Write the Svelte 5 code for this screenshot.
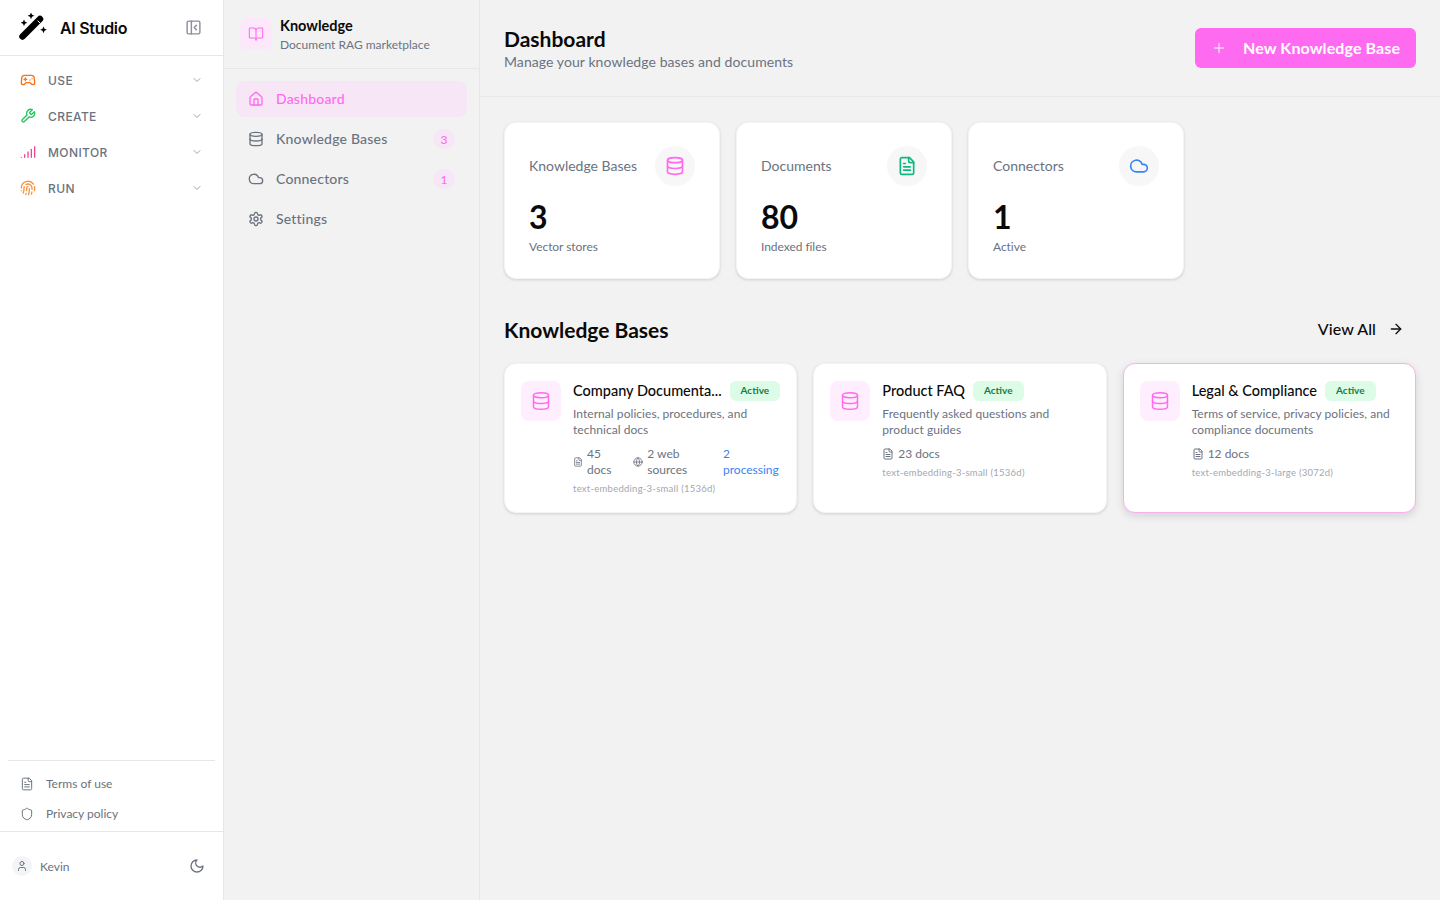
<script>
  const pink = "#ff6bf0";

  const mainNav = [
    { label: "USE", color: "#f97316", icon: "gamepad" },
    { label: "CREATE", color: "#22c55e", icon: "wrench" },
    { label: "MONITOR", color: "#ec4899", icon: "signal" },
    { label: "RUN", color: "#fb923c", icon: "fingerprint" },
  ];

  const subNav = [
    { label: "Dashboard", icon: "house", active: true },
    { label: "Knowledge Bases", icon: "database", badge: 3 },
    { label: "Connectors", icon: "cloud", badge: 1 },
    { label: "Settings", icon: "settings" },
  ];

  const stats = [
    { title: "Knowledge Bases", value: "3", note: "Vector stores", icon: "database", color: pink },
    { title: "Documents", value: "80", note: "Indexed files", icon: "file", color: "#10b981" },
    { title: "Connectors", value: "1", note: "Active", icon: "cloud", color: "#3b82f6" },
  ];

  const bases = [
    {
      name: "Company Documenta...",
      desc: "Internal policies, procedures, and technical docs",
      docs: "45 docs",
      web: "2 web sources",
      processing: "2 processing",
      model: "text-embedding-3-small (1536d)",
    },
    {
      name: "Product FAQ",
      desc: "Frequently asked questions and product guides",
      docs: "23 docs",
      model: "text-embedding-3-small (1536d)",
    },
    {
      name: "Legal & Compliance",
      desc: "Terms of service, privacy policies, and compliance documents",
      docs: "12 docs",
      model: "text-embedding-3-large (3072d)",
      hovered: true,
    },
  ];
</script>

{#snippet icon(name, size, color, sw = 2)}
  <svg class="icon" width={size} height={size} viewBox="0 0 24 24" fill="none" stroke={color} stroke-width={sw} stroke-linecap="round" stroke-linejoin="round">
    {#if name === "database"}
      <ellipse cx="12" cy="5" rx="9" ry="3" /><path d="M3 5V19A9 3 0 0 0 21 19V5" /><path d="M3 12A9 3 0 0 0 21 12" />
    {:else if name === "file"}
      <path d="M15 2H6a2 2 0 0 0-2 2v16a2 2 0 0 0 2 2h12a2 2 0 0 0 2-2V7Z" /><path d="M14 2v4a2 2 0 0 0 2 2h4" /><path d="M10 9H8" /><path d="M16 13H8" /><path d="M16 17H8" />
    {:else if name === "cloud"}
      <path d="M17.5 19H9a7 7 0 1 1 6.71-9h1.79a4.5 4.5 0 1 1 0 9Z" />
    {:else if name === "house"}
      <path d="M15 21v-8a1 1 0 0 0-1-1h-4a1 1 0 0 0-1 1v8" /><path d="M3 10a2 2 0 0 1 .709-1.528l7-5.999a2 2 0 0 1 2.582 0l7 5.999A2 2 0 0 1 21 10v9a2 2 0 0 1-2 2H5a2 2 0 0 1-2-2z" />
    {:else if name === "settings"}
      <path d="M12.22 2h-.44a2 2 0 0 0-2 2v.18a2 2 0 0 1-1 1.73l-.43.25a2 2 0 0 1-2 0l-.15-.08a2 2 0 0 0-2.73.73l-.22.38a2 2 0 0 0 .73 2.73l.15.1a2 2 0 0 1 1 1.72v.51a2 2 0 0 1-1 1.74l-.15.09a2 2 0 0 0-.73 2.73l.22.38a2 2 0 0 0 2.73.73l.15-.08a2 2 0 0 1 2 0l.43.25a2 2 0 0 1 1 1.73V20a2 2 0 0 0 2 2h.44a2 2 0 0 0 2-2v-.18a2 2 0 0 1 1-1.73l.43-.25a2 2 0 0 1 2 0l.15.08a2 2 0 0 0 2.73-.73l.22-.39a2 2 0 0 0-.73-2.73l-.15-.08a2 2 0 0 1-1-1.74v-.5a2 2 0 0 1 1-1.74l.15-.09a2 2 0 0 0 .73-2.73l-.22-.38a2 2 0 0 0-2.73-.73l-.15.08a2 2 0 0 1-2 0l-.43-.25a2 2 0 0 1-1-1.73V4a2 2 0 0 0-2-2z" /><circle cx="12" cy="12" r="3" />
    {:else if name === "book"}
      <path d="M12 7v14" /><path d="M3 18a1 1 0 0 1-1-1V4a1 1 0 0 1 1-1h5a4 4 0 0 1 4 4 4 4 0 0 1 4-4h5a1 1 0 0 1 1 1v13a1 1 0 0 1-1 1h-6a3 3 0 0 0-3 3 3 3 0 0 0-3-3z" />
    {:else if name === "globe"}
      <circle cx="12" cy="12" r="10" /><path d="M12 2a14.5 14.5 0 0 0 0 20 14.5 14.5 0 0 0 0-20" /><path d="M2 12h20" />
    {:else if name === "arrow"}
      <path d="M5 12h14" /><path d="m12 5 7 7-7 7" />
    {:else if name === "plus"}
      <path d="M5 12h14" /><path d="M12 5v14" />
    {:else if name === "chevron"}
      <path d="m6 9 6 6 6-6" />
    {:else if name === "shield"}
      <path d="M20 13c0 5-3.5 7.5-7.66 8.95a1 1 0 0 1-.67-.01C7.5 20.5 4 18 4 13V6a1 1 0 0 1 1-1c2 0 4.5-1.2 6.24-2.72a1.17 1.17 0 0 1 1.52 0C14.51 3.81 17 5 19 5a1 1 0 0 1 1 1z" />
    {:else if name === "user"}
      <path d="M19 21v-2a4 4 0 0 0-4-4H9a4 4 0 0 0-4 4v2" /><circle cx="12" cy="7" r="4" />
    {:else if name === "moon"}
      <path d="M12 3a6 6 0 0 0 9 9 9 9 0 1 1-9-9Z" />
    {:else if name === "gamepad"}
      <line x1="6" x2="10" y1="11" y2="11" /><line x1="8" x2="8" y1="9" y2="13" /><line x1="15" x2="15.01" y1="12" y2="12" /><line x1="18" x2="18.01" y1="10" y2="10" /><path d="M17.32 5H6.68a4 4 0 0 0-3.978 3.59c-.006.052-.01.101-.017.152C2.604 9.416 2 14.456 2 16a3 3 0 0 0 3 3c1 0 1.5-.5 2-1l1.414-1.414A2 2 0 0 1 9.828 16h4.344a2 2 0 0 1 1.414.586L17 18c.5.5 1 1 2 1a3 3 0 0 0 3-3c0-1.545-.604-6.584-.685-7.258-.007-.05-.011-.1-.017-.151A4 4 0 0 0 17.32 5z" />
    {:else if name === "wrench"}
      <path d="M14.7 6.3a1 1 0 0 0 0 1.4l1.6 1.6a1 1 0 0 0 1.4 0l3.77-3.77a6 6 0 0 1-7.94 7.94l-6.91 6.91a2.12 2.12 0 0 1-3-3l6.91-6.91a6 6 0 0 1 7.94-7.94l-3.76 3.76z" />
    {:else if name === "signal"}
      <path d="M2 20h.01" /><path d="M7 20v-4" /><path d="M12 20v-8" /><path d="M17 20V8" /><path d="M22 4v16" />
    {:else if name === "fingerprint"}
      <path d="M12 10a2 2 0 0 0-2 2c0 1.02-.1 2.51-.26 4" /><path d="M14 13.12c0 2.38 0 6.38-1 8.88" /><path d="M17.29 21.02c.12-.6.43-2.3.5-3.02" /><path d="M2 12a10 10 0 0 1 18-6" /><path d="M2 16h.01" /><path d="M21.8 16c.2-2 .131-5.354 0-6" /><path d="M5 19.5C5.5 18 6 15 6 12a6 6 0 0 1 .34-2" /><path d="M8.65 22c.21-.66.45-1.32.57-2" /><path d="M9 6.8a6 6 0 0 1 9 5.2v2" />
    {:else if name === "panel"}
      <rect width="18" height="18" x="3" y="3" rx="2" /><path d="M9 3v18" /><path d="m16 15-3-3 3-3" />
    {/if}
  </svg>
{/snippet}

<div class="page">
  <aside class="rail">
    <div class="brand">
      <svg class="logo" width="30" height="30" viewBox="0 0 30 30">
        <path d="M4.5 23.5 22 6" stroke="#000" stroke-width="6.5" stroke-linecap="round" />
        <path d="M19.6 7.6l2.6 2.6" stroke="#fff" stroke-width="1" />
        <path d="M13 -0.6l1 2.4 2.4 1-2.4 1-1 2.4-1-2.4-2.4-1 2.4-1zM6 6.4l1 2.4 2.4 1-2.4 1-1 2.4-1-2.4-2.4-1 2.4-1zM25.5 13.4l1 2.4 2.4 1-2.4 1-1 2.4-1-2.4-2.4-1 2.4-1z" fill="#000" />
      </svg>
      <span class="brand-name">AI Studio</span>
      <span class="collapse">{@render icon("panel", 17, "#8b8f99")}</span>
    </div>

    <nav class="rail-nav">
      {#each mainNav as item}
        <div class="rail-item">
          {@render icon(item.icon, 16, item.color)}
          <span class="rail-label">{item.label}</span>
          <span class="rail-chev">{@render icon("chevron", 12, "#9ca3af")}</span>
        </div>
      {/each}
    </nav>

    <div class="legal">
      <div class="legal-row">{@render icon("file", 14, "#6b7280", 1.7)}<span>Terms of use</span></div>
      <div class="legal-row">{@render icon("shield", 14, "#6b7280", 1.7)}<span>Privacy policy</span></div>
    </div>

    <div class="account">
      <span class="avatar">{@render icon("user", 12, "#6b7280")}</span>
      <span class="account-name">Kevin</span>
      <span class="theme">{@render icon("moon", 16, "#6b7280")}</span>
    </div>
  </aside>

  <aside class="sub">
    <div class="sub-head">
      <span class="sub-logo">{@render icon("book", 16, pink, 1.6)}</span>
      <div class="sub-text">
        <div class="sub-title">Knowledge</div>
        <div class="sub-desc">Document RAG marketplace</div>
      </div>
    </div>
    <nav class="sub-nav">
      {#each subNav as item}
        <div class="sub-item" class:active={item.active}>
          {@render icon(item.icon, 16, item.active ? pink : "#6b7280")}
          <span class="sub-label">{item.label}</span>
          {#if item.badge}<span class="count">{item.badge}</span>{/if}
        </div>
      {/each}
    </nav>
  </aside>

  <main class="main">
    <header class="top">
      <div class="top-text">
        <h1>Dashboard</h1>
        <p>Manage your knowledge bases and documents</p>
      </div>
      <button class="new">{@render icon("plus", 16, "#fff", 1.5)}<span>New Knowledge Base</span></button>
    </header>

    <div class="content">
      <section class="stats">
        {#each stats as s}
          <div class="stat">
            <div class="stat-top">
              <span class="stat-title">{s.title}</span>
              <span class="stat-icon">{@render icon(s.icon, 20, s.color)}</span>
            </div>
            <div class="stat-value">{s.value}</div>
            <div class="stat-note">{s.note}</div>
          </div>
        {/each}
      </section>

      <div class="section-head">
        <h2>Knowledge Bases</h2>
        <div class="view-all"><span>View All</span>{@render icon("arrow", 16, "#111")}</div>
      </div>

      <section class="bases">
        {#each bases as b}
          <article class="base" class:hovered={b.hovered}>
            <span class="base-icon">{@render icon("database", 20, pink, 1.7)}</span>
            <div class="base-body">
              <div class="base-head">
                <span class="base-name">{b.name}</span>
                <span class="pill">Active</span>
              </div>
              <p class="base-desc">{b.desc}</p>
              <div class="meta">
                <span class="meta-item">{@render icon("file", b.web ? 10 : 12, "#6b7280")}<span>{b.docs}</span></span>
                {#if b.web}
                  <span class="meta-item">{@render icon("globe", 10, "#6b7280")}<span>{b.web}</span></span>
                  <span class="processing">{b.processing}</span>
                {/if}
              </div>
              <div class="model">{b.model}</div>
            </div>
          </article>
        {/each}
      </section>
    </div>
  </main>
</div>

<style>
  :global(body) {
    margin: 0;
    font-family: Lato, "Liberation Sans", sans-serif;
    color: #0a0a0a;
    background: #f2f2f3;
  }
  .icon {
    display: block;
    flex: none;
  }
  .page {
    display: flex;
    height: 900px;
    overflow: hidden;
  }

  .rail {
    width: 224px;
    flex: none;
    box-sizing: border-box;
    display: flex;
    flex-direction: column;
    background: #fff;
    border-right: 1px solid #e5e7eb;
  }
  .brand {
    height: 56px;
    box-sizing: border-box;
    display: flex;
    align-items: center;
    padding: 0 21px 0 18px;
    border-bottom: 1px solid #e5e7eb;
  }
  .brand-name {
    margin-left: 12px;
    font-family: Inter, sans-serif;
    font-size: 16px;
    font-weight: 600;
    letter-spacing: -0.3px;
  }
  .collapse {
    margin-left: auto;
  }
  .rail-nav {
    flex: 1;
    padding-top: 6px;
  }
  .rail-item {
    height: 36px;
    display: flex;
    align-items: center;
    padding: 0 20px;
    gap: 12px;
  }
  .rail-label {
    font-family: Inter, sans-serif;
    font-size: 12px;
    font-weight: 500;
    letter-spacing: 0.4px;
    color: #6b7280;
  }
  .rail-chev {
    margin-left: auto;
  }
  .legal {
    margin: 0 8px;
    padding: 8px 0 2px;
    border-top: 1px solid #e5e7eb;
  }
  .legal-row {
    height: 30px;
    display: flex;
    align-items: center;
    gap: 12px;
    padding-left: 12px;
    font-size: 12px;
    color: #6b7280;
  }
  .legal-row span {
    padding-bottom: 2px;
  }
  .account {
    height: 69px;
    box-sizing: border-box;
    display: flex;
    align-items: center;
    padding: 0 18px 0 12px;
    border-top: 1px solid #e5e7eb;
    font-size: 12px;
    color: #6b7280;
  }
  .avatar {
    width: 20px;
    height: 20px;
    border-radius: 50%;
    background: #f3f4f6;
    display: flex;
    align-items: center;
    justify-content: center;
  }
  .account-name {
    margin-left: 8px;
  }
  .theme {
    margin-left: auto;
  }

  .sub {
    width: 256px;
    flex: none;
    box-sizing: border-box;
    border-right: 1px solid #e5e7eb;
  }
  .sub-head {
    height: 69px;
    box-sizing: border-box;
    display: flex;
    align-items: center;
    gap: 8px;
    padding: 0 16px;
    border-bottom: 1px solid #e5e7eb;
  }
  .sub-text {
    padding-top: 2px;
  }
  .sub-logo {
    width: 32px;
    height: 32px;
    border-radius: 8px;
    background: #fce7fb;
    display: flex;
    align-items: center;
    justify-content: center;
  }
  .sub-title {
    font-size: 14.5px;
    font-weight: 700;
    line-height: 20px;
  }
  .sub-desc {
    font-size: 12px;
    line-height: 18px;
    color: #6b7280;
  }
  .sub-nav {
    display: flex;
    flex-direction: column;
    gap: 4px;
    padding: 12px;
  }
  .sub-item {
    height: 36px;
    display: flex;
    align-items: center;
    gap: 12px;
    padding: 0 12px;
    border-radius: 8px;
    font-size: 14px;
    font-weight: 500;
    letter-spacing: 0.2px;
    color: #6b7280;
  }
  .sub-label {
    padding-bottom: 2px;
  }
  .sub-item.active {
    background: #f7e6f6;
    color: #ff6bf0;
  }
  .count {
    margin-left: auto;
    min-width: 22px;
    height: 20px;
    padding: 0 2px;
    box-sizing: border-box;
    border-radius: 10px;
    background: #f7e6f6;
    color: #ff6bf0;
    font-size: 12px;
    display: flex;
    align-items: center;
    justify-content: center;
  }

  .main {
    flex: 1;
    min-width: 0;
  }
  .top {
    height: 97px;
    box-sizing: border-box;
    display: flex;
    align-items: center;
    justify-content: space-between;
    padding: 0 24px;
    border-bottom: 1px solid #e5e7eb;
  }
  .top-text {
    padding-bottom: 1px;
  }
  h1 {
    margin: 0 0 -1px;
    font-size: 21px;
    font-weight: 700;
    line-height: 28px;
    padding-top: 1px;
  }
  .top p {
    margin: 0;
    font-size: 14px;
    line-height: 20px;
    letter-spacing: 0.08px;
    color: #6b7280;
  }
  .new {
    width: 221px;
    height: 40px;
    border: 0;
    border-radius: 6px;
    background: #ff6bf0;
    color: #fff;
    font: 700 16px Lato, "Liberation Sans", sans-serif;
    letter-spacing: 0.1px;
    display: flex;
    align-items: center;
    gap: 16px;
    padding: 0 16px;
    white-space: nowrap;
  }
  .new span {
    padding-bottom: 2px;
  }
  .content {
    padding: 25px 24px;
  }
  .stats {
    display: grid;
    grid-template-columns: repeat(4, minmax(0, 1fr));
    gap: 16px;
  }
  .stat {
    height: 157px;
    box-sizing: border-box;
    padding: 23px 24px;
    background: #fff;
    border-radius: 12px;
    border: 1px solid #f4f4f5;
    box-shadow: 0 1px 3px rgba(0, 0, 0, 0.14);
  }
  .stat-top {
    display: flex;
    align-items: center;
    justify-content: space-between;
  }
  .stat-title {
    font-size: 14px;
    padding-bottom: 2px;
    color: #6b7280;
  }
  .stat-icon {
    width: 40px;
    height: 40px;
    border-radius: 50%;
    background: #f7f7f8;
    display: flex;
    align-items: center;
    justify-content: center;
  }
  .stat-value {
    margin-top: 13px;
    font-size: 32px;
    font-weight: 700;
    line-height: 36px;
  }
  .stat-note {
    margin-top: 4px;
    font-size: 12px;
    line-height: 16px;
    letter-spacing: -0.05px;
    color: #6b7280;
  }
  .section-head {
    margin-top: 34px;
    height: 32px;
    display: flex;
    align-items: center;
    justify-content: space-between;
  }
  h2 {
    margin: 0;
    font-size: 21px;
    font-weight: 700;
  }
  .view-all {
    display: flex;
    align-items: center;
    gap: 12px;
    padding-right: 12px;
    font-size: 16px;
    font-weight: 500;
    letter-spacing: 0.1px;
  }
  .view-all span {
    padding-bottom: 2px;
  }
  .bases {
    margin-top: 18px;
    display: grid;
    grid-template-columns: repeat(3, minmax(0, 1fr));
    gap: 16px;
  }
  .base {
    height: 150px;
    box-sizing: border-box;
    display: flex;
    gap: 12px;
    padding: 17px 16px;
    background: #fff;
    border-radius: 12px;
    border: 1px solid #f4f4f5;
    box-shadow: 0 1px 3px rgba(0, 0, 0, 0.14);
  }
  .base.hovered {
    border-color: #f5b0ee;
    box-shadow: 0 3px 8px rgba(0, 0, 0, 0.13);
  }
  .base-icon {
    width: 40px;
    height: 40px;
    flex: none;
    border-radius: 8px;
    background: #ffeefd;
    display: flex;
    align-items: center;
    justify-content: center;
  }
  .base-body {
    flex: 1;
    min-width: 0;
  }
  .base-head {
    display: flex;
    align-items: center;
    gap: 8px;
    height: 20px;
  }
  .base-name {
    font-size: 14.5px;
    font-weight: 500;
    padding-bottom: 2px;
    white-space: nowrap;
  }
  .pill {
    padding: 0 11px;
    height: 20px;
    line-height: 19px;
    border-radius: 6px;
    background: #dcfce7;
    color: #15803d;
    font-size: 10px;
    font-weight: 700;
  }
  .base-desc {
    margin: 5px 0 0;
    font-size: 12px;
    line-height: 16px;
    letter-spacing: 0.05px;
    color: #6b7280;
  }
  .meta {
    margin-top: 8px;
    display: flex;
    justify-content: space-between;
    gap: 12px;
    font-size: 12px;
    line-height: 16px;
    color: #6b7280;
  }
  .base:not(:first-child) .meta {
    justify-content: flex-start;
  }
  .meta-item {
    display: flex;
    align-items: center;
    gap: 4px;
  }
  .processing {
    color: #3b82f6;
  }
  .model {
    margin-top: 4px;
    font-size: 9.5px;
    line-height: 14px;
    letter-spacing: 0.25px;
    color: #a3a7b0;
  }
</style>
